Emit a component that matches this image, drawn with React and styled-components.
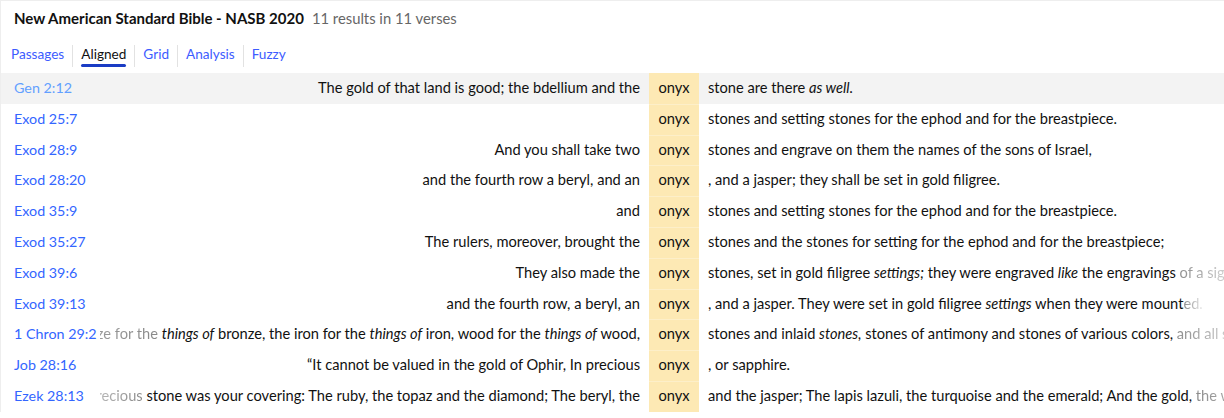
import React from "react";
import styled, { createGlobalStyle } from "styled-components";

const Global = createGlobalStyle`
  html, body { margin: 0; padding: 0; background: #fff; }
  body { font-family: "Source Sans Pro", Lato, "Noto Sans", sans-serif; color: #111; }
`;

const Panel = styled.div`
  border-top: 1px solid #eeeeee;
  border-left: 1px solid #eeeeee;
  width: 1223px;
  overflow: hidden;
`;

const Header = styled.div`
  display: flex;
  align-items: baseline;
  gap: 8px;
  padding: 6px 13px 0;
  height: 22px;
  line-height: 22px;
`;

const Title = styled.span`
  font-size: 15px;
  font-weight: 700;
  color: #111;
`;

const Count = styled.span`
  font-size: 14.8px;
  color: #666;
`;

const Tabs = styled.div`
  display: flex;
  padding-left: 10px;
  margin-top: 16px;
  margin-bottom: 6px;
`;

const Tab = styled.div`
  display: flex;
  flex-direction: column;
  padding: 0 8px;
  border-left: ${(p) => (p.$first ? "none" : "1px solid #e2e2e2")};
  padding-left: ${(p) => (p.$first ? "0" : "8px")};
  font-size: 13.6px;
  line-height: 19px;
  color: ${(p) => (p.$active ? "#111" : "#3d5cff")};
  &::after {
    content: "";
    display: block;
    height: 3px;
    border-radius: 2px;
    background: ${(p) => (p.$active ? "#1a3cc4" : "transparent")};
  }
`;

const Table = styled.div`
  display: flex;
  flex-direction: column;
`;

const Row = styled.div`
  display: grid;
  grid-template-columns: 99px 549px 50px 1fr;
  height: 30.8px;
  line-height: 30.8px;
  font-size: 14.65px;
  background: ${(p) => (p.$hover ? "#f3f3f3" : "transparent")};
`;

const Ref = styled.a`
  padding-left: 13px;
  color: ${(p) => (p.$hover ? "#62a0ff" : "#3366ff")};
  text-decoration: none;
  white-space: nowrap;
  font-size: 14.3px;
  overflow: hidden;
`;

const Left = styled.div`
  display: flex;
  justify-content: flex-end;
  overflow: hidden;
  padding-right: 9px;
  white-space: pre;
`;

const Right = styled.div`
  display: flex;
  justify-content: flex-start;
  overflow: hidden;
  padding-left: 9px;
  white-space: pre;
`;

const Line = styled.span`
  flex-shrink: 0;
  white-space: pre;
`;

const Hit = styled.div`
  background: #fde9b4;
  text-align: center;
  border-top: 1px solid ${(p) => (p.$first ? "#fde9b4" : "#fdefc9")};
  line-height: 28.8px;
`;

const Fade = styled.span`
  display: inline-block;
  white-space: pre;
  -webkit-mask-image: linear-gradient(
    ${(p) => (p.$dir === "left" ? "to left" : "to right")},
    rgba(0, 0, 0, 0.5),
    rgba(0, 0, 0, 0.08)
  );
  mask-image: linear-gradient(
    ${(p) => (p.$dir === "left" ? "to left" : "to right")},
    rgba(0, 0, 0, 0.5),
    rgba(0, 0, 0, 0.08)
  );
`;

const rows = [
  {
    ref: "Gen 2:12",
    left: <>The gold of that land is good; the bdellium and the</>,
    right: <>stone are there <i>as well.</i></>,
  },
  {
    ref: "Exod 25:7",
    left: null,
    right: <>stones and setting stones for the ephod and for the breastpiece.</>,
  },
  {
    ref: "Exod 28:9",
    left: <>And you shall take two</>,
    right: <>stones and engrave on them the names of the sons of Israel,</>,
  },
  {
    ref: "Exod 28:20",
    left: <>and the fourth row a beryl, and an</>,
    right: <>, and a jasper; they shall be set in gold filigree.</>,
  },
  {
    ref: "Exod 35:9",
    left: <>and</>,
    right: <>stones and setting stones for the ephod and for the breastpiece.</>,
  },
  {
    ref: "Exod 35:27",
    left: <>The rulers, moreover, brought the</>,
    right: <>stones and the stones for setting for the ephod and for the breastpiece;</>,
  },
  {
    ref: "Exod 39:6",
    left: <>They also made the</>,
    right: (
      <>
        stones, set in gold filigree <i>settings;</i> they were engraved <i>like</i> the engravings
        <Fade $dir="right"> of a signet</Fade>
      </>
    ),
  },
  {
    ref: "Exod 39:13",
    left: <>and the fourth row, a beryl, an</>,
    right: (
      <>
        , and a jasper. They were set in gold filigree <i>settings</i> when they were mount
        <Fade $dir="right">ed.</Fade>
      </>
    ),
  },
  {
    ref: "1 Chron 29:2",
    left: (
      <>
        <Fade $dir="left">the silver for the things of silver, and the bronze for the </Fade>
        <i>things of</i> bronze, the iron for the <i>things of</i> iron, wood for the <i>things of</i> wood,
      </>
    ),
    right: (
      <>
        stones and inlaid <i>stones,</i> stones of antimony and stones of various colors,
        <Fade $dir="right"> and all sorts</Fade>
      </>
    ),
  },
  {
    ref: "Job 28:16",
    left: <>“It cannot be valued in the gold of Ophir, In precious</>,
    right: <>, or sapphire.</>,
  },
  {
    ref: "Ezek 28:13",
    left: (
      <>
        <Fade $dir="left">Every precious</Fade> stone was your covering: The ruby, the topaz and the diamond; The beryl, the
      </>
    ),
    right: (
      <>
        and the jasper; The lapis lazuli, the turquoise and the emerald; And the gold,
        <Fade $dir="right"> the workmanship</Fade>
      </>
    ),
  },
];

const tabs = ["Passages", "Aligned", "Grid", "Analysis", "Fuzzy"];

export default function App() {
  return (
    <>
      <Global />
      <Panel>
        <Header>
          <Title>New American Standard Bible - NASB 2020</Title>
          <Count>11 results in 11 verses</Count>
        </Header>
        <Tabs>
          {tabs.map((t, i) => (
            <Tab key={t} $first={i === 0} $active={t === "Aligned"}>
              {t}
            </Tab>
          ))}
        </Tabs>
        <Table>
          {rows.map((r, i) => (
            <Row key={r.ref} $hover={i === 0}>
              <Ref href="#" $hover={i === 0}>{r.ref}</Ref>
              <Left>{r.left && <Line>{r.left}</Line>}</Left>
              <Hit $first={i === 0}>onyx</Hit>
              <Right>
                <Line>{r.right}</Line>
              </Right>
            </Row>
          ))}
        </Table>
      </Panel>
    </>
  );
}
